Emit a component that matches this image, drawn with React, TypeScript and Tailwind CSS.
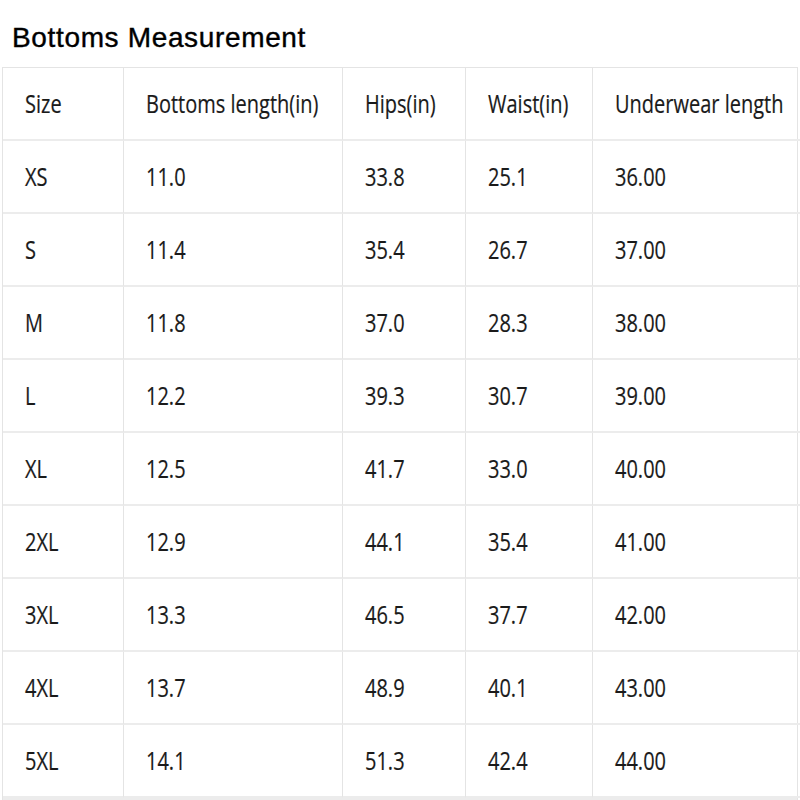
const headers = ["Size", "Bottoms length(in)", "Hips(in)", "Waist(in)", "Underwear length"];

const rows = [
  ["XS", "11.0", "33.8", "25.1", "36.00"],
  ["S", "11.4", "35.4", "26.7", "37.00"],
  ["M", "11.8", "37.0", "28.3", "38.00"],
  ["L", "12.2", "39.3", "30.7", "39.00"],
  ["XL", "12.5", "41.7", "33.0", "40.00"],
  ["2XL", "12.9", "44.1", "35.4", "41.00"],
  ["3XL", "13.3", "46.5", "37.7", "42.00"],
  ["4XL", "13.7", "48.9", "40.1", "43.00"],
  ["5XL", "14.1", "51.3", "42.4", "44.00"],
];

function Cell({ text, last }: { text: string; last: boolean }) {
  return (
    <div
      className={`flex h-[73px] items-center border-b-2 border-[#ececec] pl-[22px] ${
        last ? "" : "border-r border-r-[#e4e4e4]"
      }`}
    >
      <span className="inline-block origin-left scale-x-[0.8] whitespace-nowrap text-[25px] leading-none text-[#1a1a1a] [-webkit-text-stroke:0.2px_#1a1a1a]">
        {text}
      </span>
    </div>
  );
}

export default function App() {
  const all = [headers, ...rows];
  return (
    <div className="h-[800px] w-[800px] overflow-hidden bg-white font-['Open_Sans',sans-serif]">
      <h1 className="pl-3 pt-[23px] font-['Liberation_Sans',Arial,sans-serif] text-[28px] leading-[30px] tracking-[0.65px] text-black [-webkit-text-stroke:0.4px_#000]">
        Bottoms Measurement
      </h1>
      <div className="ml-[2px] mt-[14px] w-[796px] border-l border-t border-r border-[#e4e4e4]">
        <div className="grid grid-cols-[121px_219px_123px_127px_1fr]">
          {all.map((row, r) =>
            row.map((text, c) => (
              <Cell key={`${r}-${c}`} text={text} last={c === row.length - 1} />
            ))
          )}
        </div>
        <div className="h-[6px] bg-[#ececec]" />
      </div>
    </div>
  );
}
